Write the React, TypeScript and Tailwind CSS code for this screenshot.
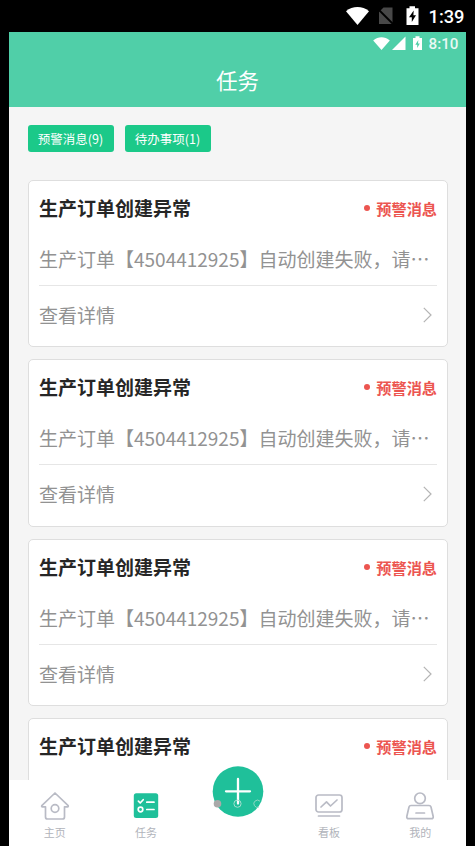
import { ReactNode } from "react";

interface Task {
  id: number;
  title: string;
  tag: string;
  content: string;
}

const tasks: Task[] = [1, 2, 3, 4].map((id) => ({
  id,
  title: "生产订单创建异常",
  tag: "预警消息",
  content: "生产订单【4504412925】自动创建失败，请…",
}));

const filters = ["预警消息(9)", "待办事项(1)"];

function DeviceStatusBar() {
  return (
    <div className="h-8 shrink-0 bg-black text-white">
      <svg className="block h-8 w-[475px]" viewBox="0 0 475 32" fill="currentColor">
        <path d="M346 11.2C352.5 5.6 362.5 5.6 369 11.2L357.5 25Z" />
        <path d="M383.5 7.5H392.5V24H379V12Z" fill="#484848" />
        <path d="M377.5 8.5L394 25" stroke="#000" strokeWidth="1.8" />
        <path d="M409.5 6.3H415V8.3H418.5V25H406.5V8.3H409.5Z" />
        <path d="M413.7 10.5L409 17.2H411.8V22L416 15.3H413.4Z" fill="#000" />
        <text x="428.5" y="23" fontSize="18.3" fontWeight="500" fontFamily="Roboto, sans-serif">
          1:39
        </text>
      </svg>
    </div>
  );
}

function Header() {
  return (
    <header className="flex h-[75px] shrink-0 flex-col bg-[#50cfa8] text-white">
      <svg className="block h-6 w-[457px]" viewBox="9 32 457 24" fill="currentColor">
        <path d="M373.2 40.5C378.3 36.2 384.7 36.2 389.8 40.5L381.5 50Z" />
        <path d="M405.5 36.5V50H392Z" />
        <path d="M415.5 36.3H419.5V38H422V50H413V38H415.5Z" />
        <path d="M418.3 40L415.3 44.7H417.2V48L419.8 43.5H418Z" fill="#50cfa8" />
        <text
          x="428.5"
          y="49.4"
          fontSize="15.2"
          fontWeight="500"
          fillOpacity="0.88"
          fontFamily="Roboto, sans-serif"
        >
          8:10
        </text>
      </svg>
      <h1 className="mt-[9px] text-center text-[21.5px] leading-[30px]">任务</h1>
    </header>
  );
}

function TaskCard({ title, tag, content }: Task) {
  return (
    <li className="h-[167.5px] shrink-0 rounded-[5px] border border-[#dedede] bg-white px-[10px]">
      <div className="flex h-[54px] items-center justify-between">
        <h2 className="text-[19px] leading-7 font-bold text-[#262626]">{title}</h2>
        <span className="flex items-center gap-[6px] text-[15.2px] leading-6 font-bold text-[#ec5550]">
          <i className="size-[6px] rounded-full bg-[#ec5550]" />
          {tag}
        </span>
      </div>
      <p className="h-[50px] overflow-hidden pt-[10.4px] text-[19px] leading-7 whitespace-nowrap text-[#929292]">
        {content}
      </p>
      <div className="flex h-[59px] items-center justify-between border-t border-[#e6e6e6] text-[19px] text-[#929292]">
        <span className="leading-7">查看详情</span>
        <svg
          className="mr-[5px] h-4 w-[9px]"
          viewBox="0 0 9 16"
          fill="none"
          stroke="#b4b4b4"
          strokeWidth="1.2"
        >
          <path d="M0.8 0.8L8 8L0.8 15.2" />
        </svg>
      </div>
    </li>
  );
}

function Tab({ label, children }: { label: string; children?: ReactNode }) {
  return (
    <div className="flex flex-1 flex-col items-center pt-[11px] text-[11px] text-[#b1b4bb]">
      <svg
        className="h-[30px] w-[30px]"
        viewBox="0 0 30 30"
        fill="none"
        stroke="#b9bbc5"
        strokeWidth="1.7"
        strokeLinecap="round"
        strokeLinejoin="round"
      >
        {children}
      </svg>
      <span className="mt-[3px] leading-4">{label}</span>
    </div>
  );
}

function TabBar() {
  return (
    <nav className="relative flex h-[66px] shrink-0 bg-white">
      <Tab label="主页">
        <path d="M15 2L28.2 14.6Q28.5 15.7 27.5 15.8H24.5V26Q24.5 28 22.5 28H7.5Q5.5 28 5.5 26V15.8H2.5Q1.3 15.7 1.8 14.6Z" />
        <circle cx="15" cy="17.5" r="3.8" />
      </Tab>
      <Tab label="任务">
        <rect x="2.8" y="2.3" width="24.4" height="24.8" rx="2.5" fill="#1fc09a" stroke="none" />
        <g stroke="#fff">
          <path d="M7.4 10.2L9.2 12L12.2 8.7M15.8 11.2H23M15.8 18.5H23" />
          <circle cx="9.5" cy="18.5" r="2.3" />
        </g>
      </Tab>
      <div className="flex-1" />
      <Tab label="看板">
        <rect x="2" y="4" width="26" height="17" rx="2.5" />
        <path d="M7 16L12.5 10.8L16.5 15L23 9M4.5 25H25.5" />
      </Tab>
      <Tab label="我的">
        <circle cx="15" cy="7.3" r="5.3" />
        <path d="M6 14.5H24Q25.6 14.5 26 16L28.2 25.5Q28.5 27.7 26.3 27.7H3.7Q1.5 27.7 1.8 25.5L4 16Q4.4 14.5 6 14.5ZM11 22H19.5" />
      </Tab>

      {/* raised add button, with the carousel dots over it */}
      <div className="absolute -top-[18px] left-[199px] size-[60px] rounded-full bg-white">
        <svg className="size-[60px]" viewBox="208 762 60 60" fill="none">
          <circle cx="238" cy="791.5" r="25.3" fill="#1fc09a" />
          <path
            d="M238 779V803.5M226 791.3H250"
            stroke="#fff"
            strokeWidth="2.3"
            strokeLinecap="round"
          />
          <circle cx="217.5" cy="803.7" r="3.8" fill="#a9a9a9" />
          <circle cx="237.5" cy="803.7" r="3.6" stroke="#a5dfd0" strokeWidth="1" />
          <path d="M260 801.2A3.6 3.6 0 1 0 259 807" stroke="#8fd8c4" strokeWidth="1" />
        </svg>
      </div>
    </nav>
  );
}

export default function App() {
  return (
    <div
      lang="zh-CN"
      className="flex h-[846px] w-[475px] flex-col overflow-hidden bg-black font-['Noto_Sans_CJK_SC',sans-serif]"
    >
      <DeviceStatusBar />
      <div className="ml-[9px] flex min-h-0 w-[457px] flex-1 flex-col bg-[#f5f5f5]">
        <Header />
        <main className="min-h-0 flex-1 overflow-hidden pr-[18px] pl-[19px]">
          <div className="flex gap-[11px] pt-[18px]">
            {filters.map((label) => (
              <button
                key={label}
                className="h-[27px] w-[86px] rounded-[3px] bg-[#1bc989] pt-px pr-px text-[12.5px] leading-[26px] text-white"
              >
                {label}
              </button>
            ))}
          </div>
          <ul className="mt-[27.6px] flex flex-col gap-[12px]">
            {tasks.map((task) => (
              <TaskCard key={task.id} {...task} />
            ))}
          </ul>
        </main>
        <TabBar />
      </div>
    </div>
  );
}
